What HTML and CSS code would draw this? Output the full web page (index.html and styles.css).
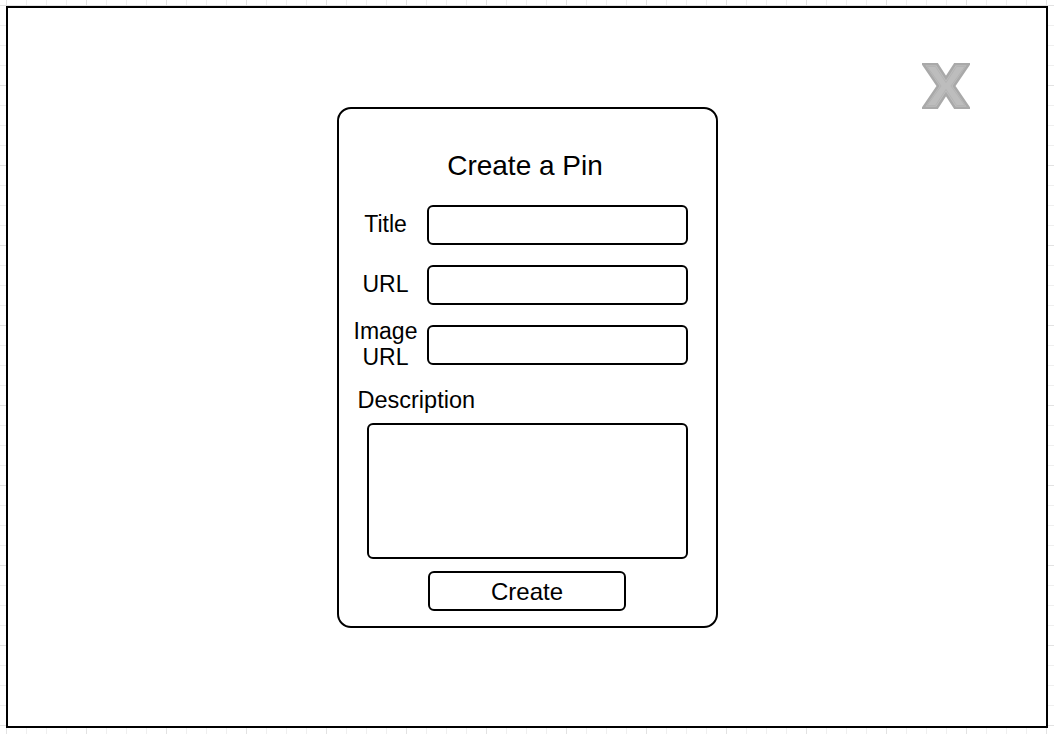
FILE: index.html
```html
<!DOCTYPE html>
<html>
<head>
<meta charset="utf-8">
<title>Create a Pin</title>
<link rel="stylesheet" href="styles.css">
</head>
<body>
<div class="frame">
  <svg class="close" width="48" height="46" viewBox="0 0 48 46" aria-label="close">
    <polygon points="1,1 15,1 24,15 33,1 47,1 32,23 47,45 33,45 24,31 15,45 1,45 16,23" fill="#bdbdbd" stroke="#a9a9a9" stroke-width="2.5" stroke-linejoin="miter"/>
    <polygon points="5,3.5 13.5,3.5 24,19.5 34.5,3.5 43,3.5 29,23 43,42.5 34.5,42.5 24,26.5 13.5,42.5 5,42.5 19,23" fill="none" stroke="#b3b3b3" stroke-width="1"/>
  </svg>
  <div class="card">
    <h1 class="heading">Create a Pin</h1>
    <div class="rows">
      <div class="row">
        <div class="label">Title</div>
        <div class="field"></div>
      </div>
      <div class="row">
        <div class="label">URL</div>
        <div class="field"></div>
      </div>
      <div class="row">
        <div class="label label-two">Image<br>URL</div>
        <div class="field"></div>
      </div>
    </div>
    <div class="desc-label">Description</div>
    <div class="area"></div>
    <div class="actions">
      <div class="button">Create</div>
    </div>
  </div>
</div>
</body>
</html>
```
FILE: styles.css
```css
html, body {
  margin: 0;
  padding: 0;
}
body {
  width: 1054px;
  height: 734px;
  overflow: hidden;
  font-family: "Liberation Sans", Arial, Helvetica, sans-serif;
  color: #000;
  background-color: #fff;
  background-image:
    linear-gradient(to right, #e2e2e2 1px, transparent 1px),
    linear-gradient(to bottom, #e2e2e2 1px, transparent 1px),
    linear-gradient(to right, #efefef 1px, transparent 1px),
    linear-gradient(to bottom, #efefef 1px, transparent 1px);
  background-size: 80px 80px, 80px 80px, 20px 20px, 20px 20px;
  background-position: 6px 5px, 6px 5px, 6px 5px, 6px 5px;
}
.frame {
  position: relative;
  box-sizing: border-box;
  margin: 6px 0 0 6px;
  width: 1042px;
  height: 722px;
  border: 2px solid #000;
  background: #fff;
  display: flex;
  align-items: center;
  justify-content: center;
}
.close {
  position: absolute;
  right: 76px;
  top: 55px;
  display: block;
}
.card {
  box-sizing: border-box;
  width: 381px;
  height: 521px;
  border: 2px solid #000;
  border-radius: 14px;
  padding: 41px 28px 0 28px;
  display: flex;
  flex-direction: column;
}
.heading {
  margin: 0 0 23px 0;
  padding-right: 4px;
  font-size: 28px;
  line-height: 32px;
  font-weight: normal;
  text-align: center;
}
.rows {
  display: flex;
  flex-direction: column;
  gap: 20px;
}
.row {
  display: flex;
  align-items: flex-start;
  gap: 22px;
  height: 40px;
}
.label {
  width: 38px;
  flex: none;
  display: flex;
  justify-content: center;
  text-align: center;
  font-size: 23px;
  line-height: 26px;
  padding-top: 6px;
  white-space: nowrap;
}
.label-two {
  line-height: 26px;
  padding-top: 0;
  margin-top: -7px;
}
.desc-label {
  margin: 22px 0 0 -9px;
  font-size: 23.5px;
  line-height: 26px;
}
.field {
  flex: 1;
  box-sizing: border-box;
  height: 40px;
  border: 2px solid #000;
  border-radius: 6px;
}
.area {
  box-sizing: border-box;
  margin-top: 10px;
  height: 136px;
  border: 2px solid #000;
  border-radius: 6px;
}
.actions {
  display: flex;
  justify-content: center;
  margin-top: 12px;
}
.button {
  box-sizing: border-box;
  width: 198px;
  height: 40px;
  border: 2px solid #000;
  border-radius: 6px;
  font-size: 24px;
  line-height: 38px;
  text-align: center;
}
```
